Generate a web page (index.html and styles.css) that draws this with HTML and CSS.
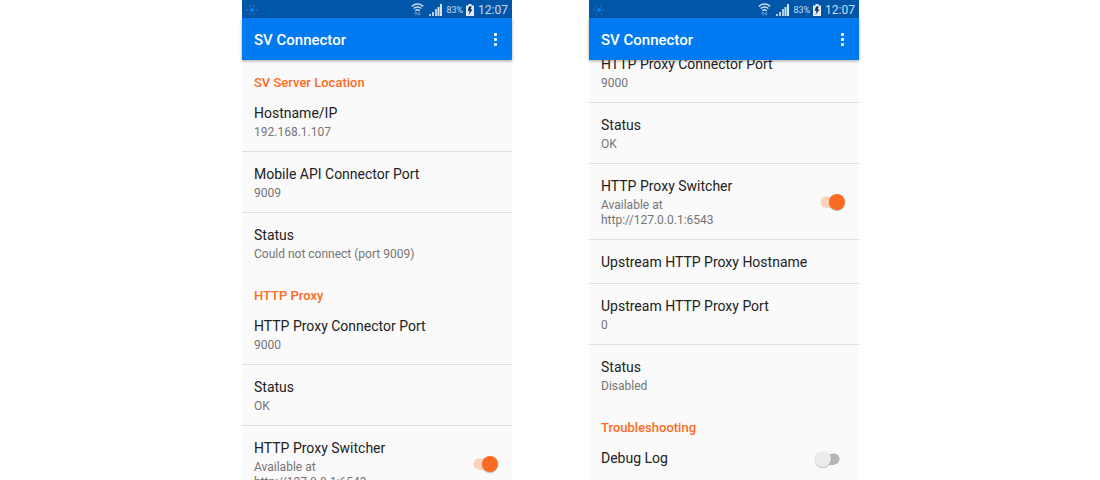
FILE: index.html
```
<!DOCTYPE html>
<html lang="en">
<head>
<meta charset="utf-8">
<title>SV Connector</title>
<link rel="stylesheet" href="styles.css">
</head>
<body>
<svg class="symbols" width="0" height="0" aria-hidden="true">
  <symbol id="flake" viewBox="0 0 12 12">
    <g stroke="#1068bf" stroke-width="1"><path d="M2.500 6h7M4.200 3l3.600 6M7.800 3l-3.600 6"/></g>
    <circle cx="6" cy="6" r="1.800" fill="#0a80f4"/>
    <g fill="#4c6296"><circle cx="1.200" cy="6" r=".9"/><circle cx="10.800" cy="6" r=".9"/><circle cx="3.500" cy="1.700" r=".9"/><circle cx="8.500" cy="1.700" r=".9"/><circle cx="3.500" cy="10.300" r=".9"/><circle cx="8.500" cy="10.300" r=".9"/></g>
  </symbol>
  <symbol id="wifi" viewBox="0 0 13 13">
    <g fill="none" stroke="#c9dcef" stroke-width="1.500"><path d="M.8 3.300Q6.500-1.200 12.200 3.300M2.600 5.500Q6.500 2.300 10.400 5.500M4.300 7.700Q6.500 5.700 8.700 7.700"/></g>
    <path d="M5 12.500V9M3.500 10.500 5 9 6.500 10.500M8 8.500V12M6.500 10.500 8 12.200 9.500 10.500" fill="none" stroke="#6f9fcf" stroke-width="1"/>
  </symbol>
  <symbol id="signal" viewBox="0 0 13 12">
    <path d="M0 10h2v2H0zM3 8h2v4H3zM6 5h2v7H6z" fill="#b4cde6"/><path d="M8.500 3h2v9h-2zM11 0h2v12h-2z" fill="#d5e4f3"/>
  </symbol>
  <symbol id="battery" viewBox="0 0 8 12">
    <path d="M2.500 0h3v1.500H8V12H0V1.500h2.500z" fill="#e3edf7"/><path d="M5.800 2.500H3L1.700 6.800h2L2.500 11 6.500 5.500h-2z" fill="#0b2b50"/>
  </symbol>
</svg>
<main class="screens">
  <section class="phone">
    <div class="statusbar">
      <svg class="flake"><use href="#flake"/></svg>
      <svg class="wifi"><use href="#wifi"/></svg>
      <svg class="signal"><use href="#signal"/></svg>
      <span class="percent">83%</span>
      <svg class="battery"><use href="#battery"/></svg>
      <span class="clock">12:07</span>
    </div>
    <header class="appbar">
      <h1 class="app-title">SV Connector</h1>
      <button class="more" aria-label="More options"><i class="dot"></i><i class="dot"></i><i class="dot"></i></button>
    </header>
    <div class="viewport">
      <div class="settings">
        <h2 class="group-title">SV Server Location</h2>
        <div class="row"><div><div class="name">Hostname/IP</div><div class="value">192.168.1.107</div></div></div>
        <div class="row"><div><div class="name">Mobile API Connector Port</div><div class="value">9009</div></div></div>
        <div class="row last"><div><div class="name">Status</div><div class="value">Could not connect (port 9009)</div></div></div>
        <h2 class="group-title">HTTP Proxy</h2>
        <div class="row"><div><div class="name">HTTP Proxy Connector Port</div><div class="value">9000</div></div></div>
        <div class="row"><div><div class="name">Status</div><div class="value">OK</div></div></div>
        <div class="row"><div><label class="name" for="switcher-a">HTTP Proxy Switcher</label><div class="value">Available at<br>http://127.0.0.1:6543</div></div><input class="switch" type="checkbox" role="switch" id="switcher-a" checked></div>
      </div>
    </div>
  </section>
  <section class="phone">
    <div class="statusbar">
      <svg class="flake"><use href="#flake"/></svg>
      <svg class="wifi"><use href="#wifi"/></svg>
      <svg class="signal"><use href="#signal"/></svg>
      <span class="percent">83%</span>
      <svg class="battery"><use href="#battery"/></svg>
      <span class="clock">12:07</span>
    </div>
    <header class="appbar">
      <h1 class="app-title">SV Connector</h1>
      <button class="more" aria-label="More options"><i class="dot"></i><i class="dot"></i><i class="dot"></i></button>
    </header>
    <div class="viewport">
      <div class="settings scrolled">
        <div class="row"><div><div class="name">HTTP Proxy Connector Port</div><div class="value">9000</div></div></div>
        <div class="row"><div><div class="name">Status</div><div class="value">OK</div></div></div>
        <div class="row"><div><label class="name" for="switcher-b">HTTP Proxy Switcher</label><div class="value">Available at<br>http://127.0.0.1:6543</div></div><input class="switch" type="checkbox" role="switch" id="switcher-b" checked></div>
        <div class="row single"><div class="name">Upstream HTTP Proxy Hostname</div></div>
        <div class="row"><div><div class="name">Upstream HTTP Proxy Port</div><div class="value">0</div></div></div>
        <div class="row last"><div><div class="name">Status</div><div class="value">Disabled</div></div></div>
        <h2 class="group-title">Troubleshooting</h2>
        <div class="row single last"><label class="name" for="debug">Debug Log</label><input class="switch" type="checkbox" role="switch" id="debug"></div>
      </div>
    </div>
  </section>
</main>
</body>
</html>
```
FILE: styles.css
```
* { box-sizing: border-box; }
body {
  margin: 0;
  background: #fff;
  font-family: Roboto, "Noto Sans", sans-serif;
  color: #212121;
}
.symbols { position: absolute; }
.screens {
  display: grid;
  grid-template-columns: 1fr 1fr;
  gap: 77px;
  padding: 0 241px 0 242px;
  height: 100vh;
  overflow: hidden;
}
.phone {
  display: flex;
  flex-direction: column;
  min-width: 0;
  min-height: 0;
  background: #fafafa;
}
.statusbar {
  display: flex;
  align-items: center;
  flex: none;
  height: 18px;
  padding: 1px 4px 0;
  background: #0056a8;
  color: #c9dcef;
}
.flake { width: 12px; height: 12px; margin-right: auto; }
.wifi { width: 13px; height: 13px; margin-right: 5px; }
.signal { width: 13px; height: 12px; margin-right: 4px; }
.battery { width: 8px; height: 12px; margin: 0 4px 0 3px; }
.percent { font-size: 9px; }
.clock { font-size: 12px; }
.appbar {
  position: relative;
  z-index: 1;
  display: flex;
  align-items: center;
  justify-content: space-between;
  flex: none;
  height: 42px;
  padding: 0 8px 0 12px;
  background: #007af0;
  box-shadow: 0 1px 3px rgba(0, 0, 0, .35);
  color: #fff;
}
.app-title { margin: 0; padding-top: 2px; font-size: 15px; font-weight: 500; line-height: 20px; }
.more {
  display: grid;
  gap: 2px;
  justify-items: center;
  width: 18px;
  padding: 4px 0;
  border: 0;
  background: none;
}
.dot { width: 3px; height: 3px; border-radius: 1px; background: #fff; }
.viewport { flex: 1; min-height: 0; overflow: hidden; }
.scrolled { margin-top: -18px; }
.group-title {
  margin: 0;
  padding: 14px 12px 0;
  color: #ff6b22;
  font-size: 13px;
  font-weight: 500;
  line-height: 17px;
}
.row {
  display: flex;
  align-items: center;
  justify-content: space-between;
  padding: 12px 14px 11px 12px;
  border-bottom: 1px solid #dedede;
}
.single { padding-bottom: 10px; }
.last { border-bottom: 0; }
.name { display: block; font-size: 14px; line-height: 21px; }
.value { margin-top: 1px; color: #757575; font-size: 12px; line-height: 15px; }
.switch {
  appearance: none;
  display: flex;
  align-items: center;
  flex: none;
  width: 30px;
  height: 16px;
  margin: 0;
  background: radial-gradient(circle at 19px 8px, #b5b5b5 5px, transparent 6px), linear-gradient(#b5b5b5, #b5b5b5) 10px 3px / 9px 11px no-repeat;
}
.switch::before {
  content: "";
  width: 16px;
  height: 16px;
  border-radius: 50%;
  background: #ececec;
  box-shadow: 0 1px 1px rgba(0, 0, 0, .25);
}
.switch:checked {
  justify-content: flex-end;
  background: radial-gradient(circle at 11px 8px, #fdd1bc 5px, transparent 6px), linear-gradient(#fdd1bc, #fdd1bc) 11px 3px / 9px 11px no-repeat;
}
.switch:checked::before { background: #fb6a20; }
```
